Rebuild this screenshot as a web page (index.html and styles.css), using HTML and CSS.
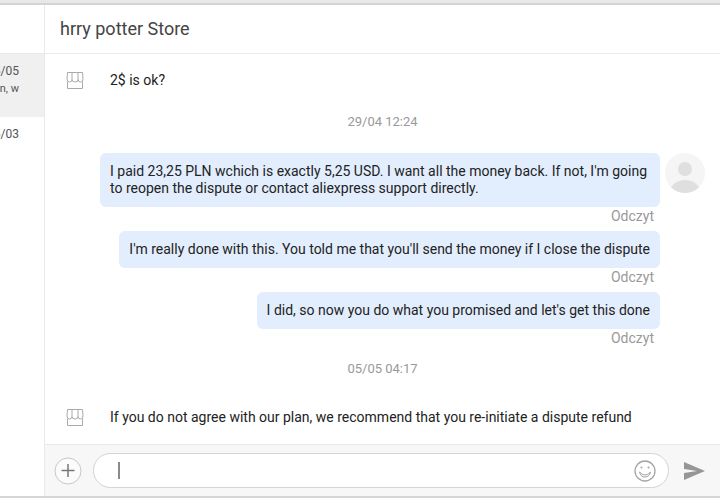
FILE: index.html
```html
<!DOCTYPE html>
<html lang="pl">
  <head>
    <meta charset="UTF-8" />
    <meta name="viewport" content="width=device-width, initial-scale=1.0" />
    <title>hrry potter Store</title>
    <link rel="stylesheet" href="styles.css">
  </head>
  <body>
    <div class="app">
      <!-- Conversation list -->
      <aside class="sidebar">
        <div class="sidebar-head"></div>
        <div class="thread active">
          <time>5/05</time>
          <p>n, w</p>
        </div>
        <div class="thread">
          <time>5/03</time>
        </div>
      </aside>
      <!-- Chat -->
      <main class="chat">
        <header>
          <h1>hrry potter Store</h1>
        </header>
        <section class="messages">
          <div class="row">
            <svg class="shop-icon" viewBox="0 0 18 18">
              <path d="M1.500 1.500h15L17 8q0 3-2.500 3T12 8.500Q12 11 9 11T6 8.500Q6 11 3.500 11T1 8zM6 1.500v7M12 1.500v7M1.500 10.500v7h15v-7" />
            </svg>
            <p>2$ is ok?</p>
          </div>
          <time class="date">29/04 12:24</time>
          <div class="sent">
            <div class="sent-list">
              <p class="bubble">I paid 23,25 PLN wchich is exactly 5,25 USD. I want all the money back. If not, I'm going to reopen the dispute or contact aliexpress support directly.</p>
              <span class="status">Odczyt</span>
              <p class="bubble">I'm really done with this. You told me that you'll send the money if I close the dispute</p>
              <span class="status">Odczyt</span>
              <p class="bubble">I did, so now you do what you promised and let's get this done</p>
              <span class="status">Odczyt</span>
            </div>
            <svg class="avatar" viewBox="0 0 40 40">
              <circle cx="20" cy="20" r="20" fill="#f5f5f5" />
              <circle cx="20" cy="16" r="7" fill="#dfdfdf" />
              <path d="M6 34.300Q11 27 20 27t14 7.300Q28 40 20 40T6 34.300z" fill="#dfdfdf" />
            </svg>
          </div>
          <time class="date">05/05 04:17</time>
          <div class="row">
            <svg class="shop-icon" viewBox="0 0 18 18">
              <path d="M1.500 1.500h15L17 8q0 3-2.500 3T12 8.500Q12 11 9 11T6 8.500Q6 11 3.500 11T1 8zM6 1.500v7M12 1.500v7M1.500 10.500v7h15v-7" />
            </svg>
            <p>If you do not agree with our plan, we recommend that you re-initiate a dispute refund</p>
          </div>
        </section>
        <!-- Message box -->
        <form class="composer">
          <button type="button" class="add" aria-label="Add">
            <svg viewBox="0 0 28 28">
              <circle cx="14" cy="14" r="13" fill="#fbfbfb" stroke="#c8c8c8" />
              <path d="M7.500 13.500h13M14 7v13" stroke="#77777b" stroke-width="1.500" />
            </svg>
          </button>
          <div class="field">
            <span class="caret"></span>
            <input type="text" aria-label="Message" />
            <button type="button" aria-label="Emoji">
              <svg viewBox="0 0 22 22" fill="none" stroke="#a5a5a5">
                <circle cx="11" cy="11" r="10" stroke-width="1.300" />
                <path d="M5.500 12q1 5 5.500 5t5.500-5M5.500 12q2.500 3 5.500 3t5.500-3" />
                <circle cx="7.500" cy="7.500" r="1" fill="#a5a5a5" stroke="none" />
                <circle cx="14.500" cy="7.500" r="1" fill="#a5a5a5" stroke="none" />
              </svg>
            </button>
          </div>
          <button type="submit" class="send" aria-label="Send">
            <svg viewBox="0 0 21 18">
              <path d="M0 0l21 9L0 18v-7l13-2L0 7z" fill="#969696" />
            </svg>
          </button>
        </form>
      </main>
    </div>
  </body>
</html>
```
FILE: styles.css
```css
* {
  margin: 0;
  padding: 0;
  box-sizing: border-box;
}
:root {
  --line: #e9e9e9;
  --bubble: #e2eefe;
  --muted: #999999;
}
body {
  font-family: Roboto, sans-serif;
  font-size: 14px;
  line-height: 17px;
  color: #222222;
  background: #ffffff;
}
button {
  display: flex;
  border: none;
  background: none;
  cursor: pointer;
}
.app {
  display: flex;
  min-height: 100vh;
  border-bottom: 2px solid #d6d6d6;
}
.app::before {
  content: "";
  position: absolute;
  top: 0;
  left: 0;
  width: 100%;
  height: 3px;
  background: #e8e8e8;
  border-bottom: 2px solid #d4d4d4;
}
/* ================= SIDEBAR ================= */
.sidebar {
  flex: 0 0 45px;
  padding-top: 5px;
  border-right: 1px solid var(--line);
  overflow: hidden;
}
.sidebar-head {
  height: 49px;
  border-bottom: 1px solid var(--line);
}
.thread {
  display: flex;
  flex-direction: column;
  align-items: flex-end;
  min-height: 63px;
  padding: 8px 25px 8px 0;
  font-size: 11px;
  line-height: 18px;
  color: #555555;
  white-space: nowrap;
}
.thread time {
  font-size: 12px;
}
.thread.active {
  background: #f0f0f0;
}
/* ================= CHAT ================= */
.chat {
  flex: 1;
  min-width: 0;
  display: flex;
  flex-direction: column;
  padding-top: 5px;
}
header {
  padding: 12px 15px;
  border-bottom: 1px solid var(--line);
}
h1 {
  font-size: 18px;
  font-weight: 400;
  line-height: 24px;
  color: #444444;
}
.messages {
  flex: 1;
  display: flex;
  flex-direction: column;
  padding: 9px 15px 0;
}
.row {
  display: flex;
  align-items: center;
  gap: 26px;
  padding: 8px 0 17px 6px;
}
.shop-icon {
  flex: none;
  width: 18px;
  height: 18px;
  fill: none;
  stroke: #aaaaaa;
}
.date {
  margin: 8px 0 23px;
  text-align: center;
  font-size: 13px;
  line-height: 16px;
  color: var(--muted);
}
.sent {
  display: flex;
  gap: 5px;
}
.sent-list {
  flex: 1;
  display: flex;
  flex-direction: column;
  align-items: flex-end;
  padding-left: 40px;
}
.bubble {
  padding: 10px;
  border-radius: 6px;
  background: var(--bubble);
}
.status {
  margin: 0 6px 6px 0;
  line-height: 18px;
  color: var(--muted);
}
.avatar {
  flex: none;
  width: 40px;
  height: 40px;
}
/* ================= COMPOSER ================= */
.composer {
  display: flex;
  align-items: center;
  gap: 11px;
  padding: 8px 15px 8px 9px;
  border-top: 1px solid var(--line);
  background: #f7f7f7;
}
.add svg {
  width: 28px;
  height: 28px;
}
.field {
  flex: 1;
  display: flex;
  align-items: center;
  height: 35px;
  padding: 0 12px 0 24px;
  border: 1px solid #d4d4d4;
  border-radius: 18px;
  background: #ffffff;
}
.caret {
  width: 2px;
  height: 17px;
  background: #8a8a8a;
}
.field input {
  flex: 1;
  min-width: 0;
  border: none;
  outline: none;
  background: none;
  font: inherit;
}
.field svg {
  width: 22px;
  height: 22px;
}
.send {
  margin-left: 4px;
}
.send svg {
  width: 21px;
  height: 18px;
}
```
